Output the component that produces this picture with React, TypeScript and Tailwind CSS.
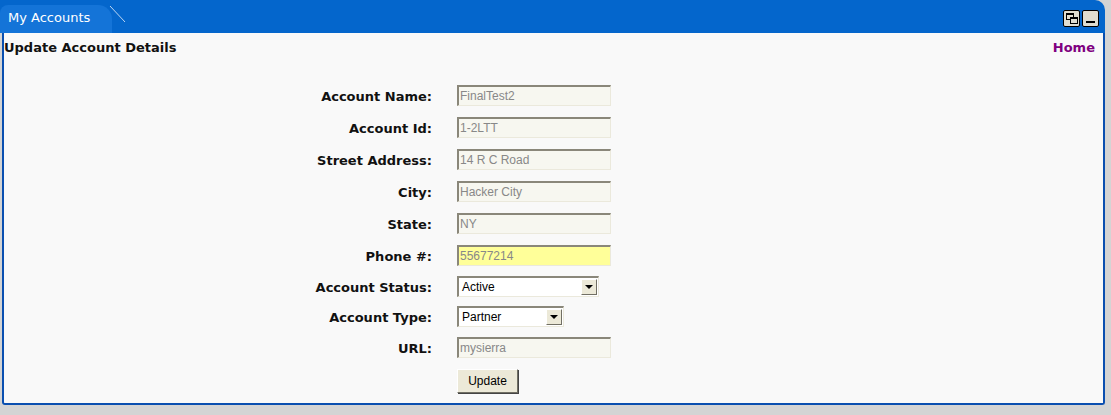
export default function App() {
  const inp = (v: string, yellow = false) => (
    <div className={`w-[154px] h-[21px] border-t-2 border-l-2 border-[#8a877a] border-r border-b border-r-[#ebe9dc] border-b-[#ebe9dc] ${yellow ? "bg-[#ffff99]" : "bg-[#f7f7f0]"} text-[12px] text-[#888] pl-[1px] leading-[18px]`} style={{ fontFamily: "Arial, 'Liberation Sans', sans-serif" }}>{v}</div>
  );
  const sel = (v: string, w: string) => (
    <div className={`${w} h-[21px] border-t-2 border-l-2 border-[#8a877a] border-r border-b border-r-[#ebe9dc] border-b-[#ebe9dc] bg-white flex items-center justify-between text-[12px] text-black pl-[3px]`} style={{ fontFamily: "Arial, 'Liberation Sans', sans-serif" }}>
      <span>{v}</span>
      <div className="w-[16px] h-[16px] mr-[1px] bg-[#ece9d8] border border-t-white border-l-white border-r-[#716f64] border-b-[#716f64] flex items-center justify-center">
        <div className="w-0 h-0 border-l-[4px] border-r-[4px] border-t-[4px] border-l-transparent border-r-transparent border-t-black" />
      </div>
    </div>
  );
  const rows: [string, React.ReactNode][] = [
    ["Account Name:", inp("FinalTest2")],
    ["Account Id:", inp("1-2LTT")],
    ["Street Address:", inp("14 R C Road")],
    ["City:", inp("Hacker City")],
    ["State:", inp("NY")],
    ["Phone #:", inp("55677214", true)],
    ["Account Status:", sel("Active", "w-[142px]")],
    ["Account Type:", sel("Partner", "w-[107px]")],
    ["URL:", inp("mysierra")],
  ];
  const heights = ["h-[32px]", "h-[32px]", "h-[32px]", "h-[32px]", "h-[32px]", "h-[31px]", "h-[30px]", "h-[31px]", "h-[31px]"];
  return (
    <div className="w-[1111px] h-[415px] bg-[#d4d4d4] pr-[6px] pb-[10px]" style={{ fontFamily: "Verdana, 'DejaVu Sans', sans-serif" }}>
      <div className="h-[33px] bg-[#0466cc] rounded-tr-[10px] relative flex items-end">
        <div className="absolute left-0 top-[5px] h-[28px] w-[112px] bg-[#1474d8] rounded-tl-[8px] rounded-tr-[14px]" />
        <svg className="absolute left-[108px] top-[4px]" width="20" height="24"><line x1="2" y1="2" x2="17" y2="18" stroke="#bcd6f3" strokeWidth="1" /></svg>
        <div className="absolute left-[8px] top-[8px] text-white text-[13px]">My Accounts</div>
        <div className="absolute right-[6px] top-[10px] flex gap-[2px]">
          <div className="w-[17px] h-[17px] bg-[#e0ddd0] border border-black rounded-[2px] flex items-center justify-center relative">
            <div className="absolute left-[2px] top-[2px] w-[8px] h-[7px] border border-black border-t-2" />
            <div className="absolute left-[6px] top-[6px] w-[8px] h-[7px] border border-black border-t-2 bg-[#e0ddd0]" />
          </div>
          <div className="w-[17px] h-[17px] bg-[#e0ddd0] border border-black rounded-[2px] flex items-end justify-center pb-[3px]">
            <div className="w-[9px] h-[2px] bg-black" />
          </div>
        </div>
      </div>
      <div className="h-[372px] bg-[#f9f9f9] border-l-2 border-r-2 border-b-2 border-[#0a4fb0] ml-[2px] rounded-b-[3px] relative">
        <div className="flex justify-between pl-0 pr-[2px] pt-[5px] text-[13px] font-bold">
          <span className="text-[#111]">Update Account Details</span>
          <span className="text-[#800080] mr-[6px]">Home</span>
        </div>
        <div className="mt-[27px]">
          {rows.map(([l, c], i) => (
            <div key={l} className={`flex items-start ${heights[i]}`}>
              <div className="w-[428px] text-right text-[13px] font-bold text-[#111] pt-[2px]">{l}</div>
              <div className="ml-[25px]">{c}</div>
            </div>
          ))}
          <div className="ml-[453px] mt-[1px] w-[61px] h-[24px] bg-[#ece9d8] border border-t-white border-l-white border-r-[#716f64] border-b-[#716f64] shadow-[1px_1px_0_#444] text-[12px] flex items-center justify-center" style={{ fontFamily: "Arial, 'Liberation Sans', sans-serif" }}>Update</div>
        </div>
      </div>
    </div>
  );
}
